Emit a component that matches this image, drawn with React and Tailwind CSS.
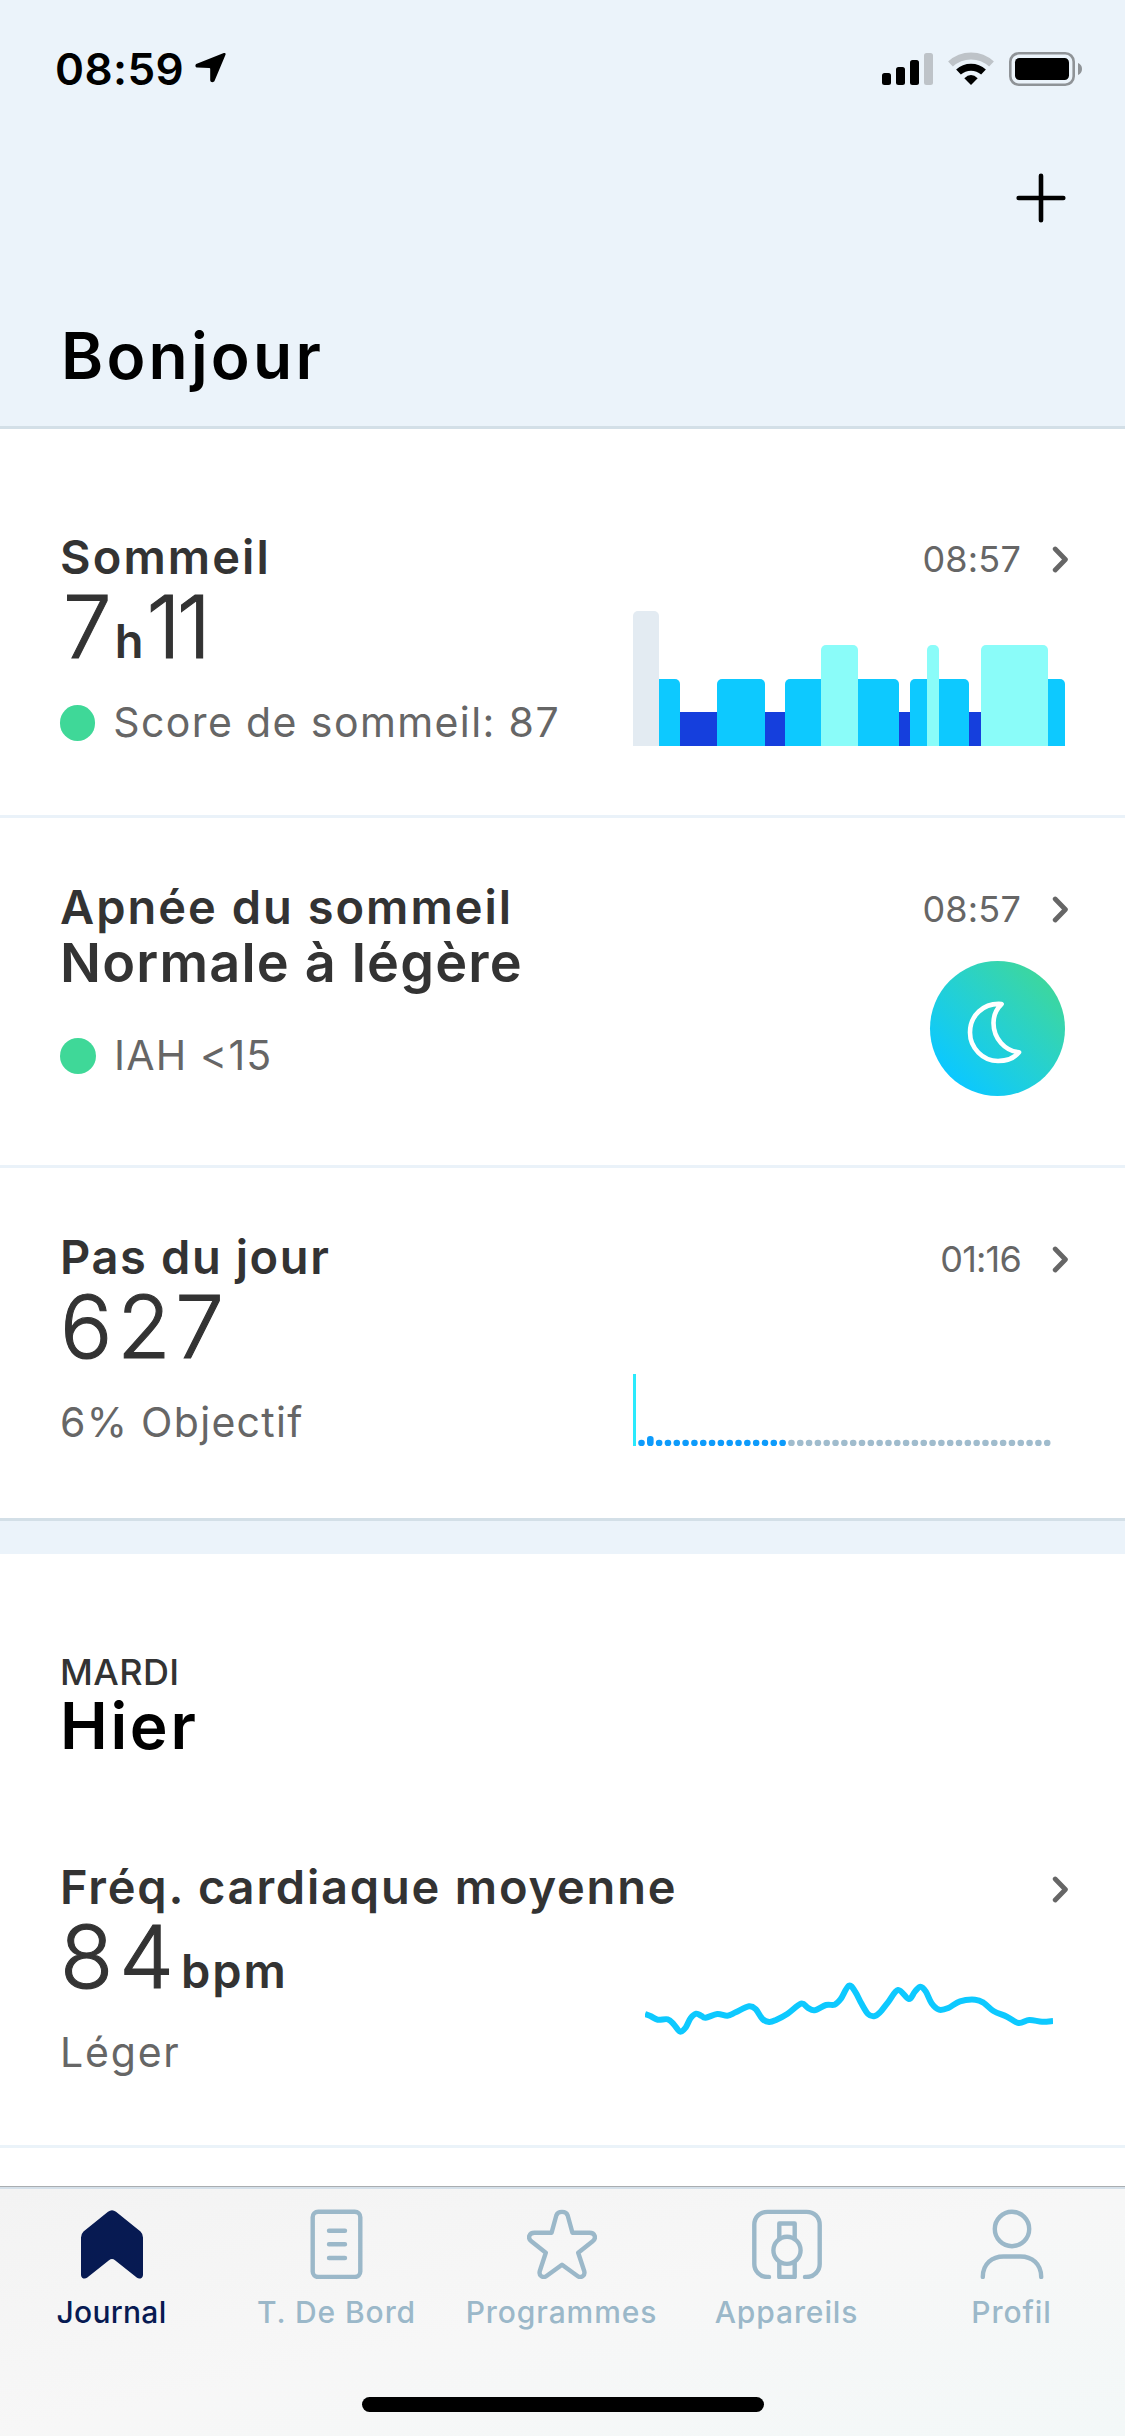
import React from 'react';

// sleep phases: width in px + level
const sleepBars = [
    { w: 26, level: 'awake', round: 'both' },
    { w: 21, level: 'light', round: 'right' },
    { w: 37, level: 'deep' },
    { w: 48, level: 'light', round: 'both' },
    { w: 20, level: 'deep' },
    { w: 36, level: 'light', round: 'left' },
    { w: 37, level: 'rem', round: 'both' },
    { w: 41, level: 'light', round: 'right' },
    { w: 11, level: 'deep' },
    { w: 17, level: 'light', round: 'left' },
    { w: 12, level: 'rem', round: 'both' },
    { w: 30, level: 'light', round: 'right' },
    { w: 12, level: 'deep' },
    { w: 67, level: 'rem', round: 'both' },
    { w: 17, level: 'light', round: 'right' },
];

const levelClass = {
    awake: 'h-[135px] bg-[#e3ebf2]',
    rem: 'h-[101px] bg-[#8afcf9]',
    light: 'h-[67px] bg-[#0dc9ff]',
    deep: 'h-[34px] bg-[#153fdd]',
};

const roundClass = {
    both: 'rounded-t-[5px]',
    left: 'rounded-tl-[5px]',
    right: 'rounded-tr-[5px]',
};

const heartPoints = [
    [0, 34], [5.4, 36], [12.7, 39.7], [22.8, 39.3], [28.8, 44.3], [35.2, 51.7], [40.8, 47.3], [45.5, 38.3],
    [51.2, 33.7], [56.2, 35.7], [60.6, 37.7], [72.3, 34], [82.4, 35.7], [90.7, 32.3], [104, 26.3], [110.8, 29.3],
    [117.5, 39], [124.2, 42], [131, 40], [142.6, 33.7], [156, 23.7], [162.7, 27.7], [169.4, 30.3], [181, 25],
    [189.5, 24.7], [195.5, 19.3], [203.9, 5.7], [210.2, 11.7], [216.3, 23.3], [223, 34], [229, 36.3], [234.7, 32.7],
    [243, 22.3], [253.1, 10], [263.8, 19], [269.8, 11.7], [275.5, 6.7], [280.9, 11.7], [286.6, 23.3], [294, 29.7],
    [303.3, 28], [315, 21.3], [330.1, 19.7], [338.5, 22.7], [348.5, 31], [361.9, 36.7], [373.6, 43], [384.3, 40],
    [397, 41.7], [408, 41],
];

// Catmull-Rom to bezier
function smoothPath(pts) {
    let d = `M${pts[0][0]} ${pts[0][1]}`;
    for (let i = 0; i < pts.length - 1; i++) {
        const p0 = pts[i - 1] || pts[i];
        const p1 = pts[i];
        const p2 = pts[i + 1];
        const p3 = pts[i + 2] || p2;
        d += `C${p1[0] + (p2[0] - p0[0]) / 6} ${p1[1] + (p2[1] - p0[1]) / 6} ${p2[0] - (p3[0] - p1[0]) / 6} ${p2[1] - (p3[1] - p1[1]) / 6} ${p2[0]} ${p2[1]}`;
    }
    return d;
}

function SleepChart() {
    return (
        <div className="flex h-[135px] w-[432px] items-end">
            {sleepBars.map((bar, i) => (
                <div
                    key={i}
                    className={`${levelClass[bar.level]} ${roundClass[bar.round] || ''}`}
                    style={{ width: bar.w }}
                />
            ))}
        </div>
    );
}

function MoonBadge() {
    return (
        <div className="h-[135px] w-[135px] rounded-full bg-linear-to-tr from-[#0bc8ff] from-15% to-[#3fd798] to-90%">
            <svg viewBox="0 0 135 135" className="h-full w-full" fill="none" stroke="#fff" strokeWidth="4.6" strokeLinejoin="round">
                <path d="M71.6 43C53 41.6 40 55 40 71.5C40 87 53 100 68 100C77 100 84.5 96.8 89 91.3C75 90 63.5 77.5 63.5 62C63.5 54.5 66.5 48 71.6 43Z" />
            </svg>
        </div>
    );
}

function StepsChart() {
    return (
        <svg viewBox="0 0 432 135" className="h-[135px] w-[432px]">
            <rect x="0" y="63" width="3" height="72" fill="#2aeafc" />
            {Array.from({ length: 47 }, (_, i) => (
                <rect
                    key={i}
                    x={5.2 + i * 8.82}
                    y={i === 1 ? 125 : 128.8}
                    width="6.6"
                    height={i === 1 ? 10 : 6.2}
                    rx="3.1"
                    fill={i < 17 ? '#0d9bfb' : '#a0bccd'}
                />
            ))}
        </svg>
    );
}

function HeartChart() {
    return (
        <svg viewBox="0 0 408 60" className="mt-[39px] mr-3 h-[60px] w-[408px]" fill="none">
            <path d={smoothPath(heartPoints)} stroke="#0dc9ff" strokeWidth="6" />
        </svg>
    );
}

function Row({ title, titleSpacing = 'tracking-[1.8px]', time, timeSpacing = 'tracking-[0.2px]', value, sub, border, chart }) {
    return (
        <div className={`flex justify-between border-b-3 pr-[60px] pl-[60px] ${border}`}>
            {/* long titles run over the empty part of the right column */}
            <div className="w-[500px] pt-[66px] whitespace-nowrap">
                <h2 className={`text-[47px] leading-[46px] font-semibold text-[#333] ${titleSpacing}`}>{title}</h2>
                {value}
                {sub}
            </div>
            <div className="flex shrink-0 flex-col items-end pt-[73px]">
                <div className="-mr-[3px] mb-[34px] flex h-9 items-center gap-[31px]">
                    <span className={`text-[36px] leading-[36px] text-[#666] ${timeSpacing}`}>{time}</span>
                    <svg viewBox="0 0 16 27" className="h-[27px] w-4" fill="none" stroke="#666" strokeWidth="4.8" strokeLinecap="round" strokeLinejoin="round">
                        <path d="M3.2 3L13.4 13.5L3.2 24" />
                    </svg>
                </div>
                {chart}
            </div>
        </div>
    );
}

function Dot() {
    return <span className="mr-[18px] h-9 w-9 rounded-full bg-[#3fd898]" />;
}

function Unit({ className, children }) {
    return <span className={`text-[47px] leading-none font-semibold [-webkit-text-stroke:0] ${className}`}>{children}</span>;
}

function BigValue({ className, children }) {
    return (
        <p className={`mt-1 flex h-[86px] items-baseline text-[87px] leading-[86px] font-light text-[#333] [-webkit-text-stroke:1.1px_#333] ${className}`}>
            {children}
        </p>
    );
}

function StatusBar() {
    return (
        <div className="flex justify-between pt-[47px] pr-[43px] pl-[55px]">
            <div className="flex h-11 items-center">
                <span className="text-[44px] leading-[44px] font-semibold tracking-[0.4px]">08:59</span>
                <svg viewBox="0 0 32 32" className="mb-[2px] ml-[11px] h-8 w-8" fill="#000">
                    <path d="M28.8 1C30.3 0.5 31 1.6 30.4 3L19.6 28.8C18.6 31 15.2 30.6 15.2 28V17C15.2 16.2 14.8 15.9 14 15.9L2.5 15.6C0 15.5 -0.3 12.6 1.8 11.7Z" />
                </svg>
            </div>
            <svg viewBox="0 0 200 34" className="mt-[5px] h-[34px] w-[200px]">
                <rect x="0" y="21" width="9" height="12" rx="2.5" />
                <rect x="14" y="15" width="9" height="18" rx="2.5" />
                <rect x="28" y="8" width="9" height="25" rx="2.5" />
                <rect x="42" y="1" width="9" height="32" rx="2.5" fill="#bec3c8" />
                <path d="M68.5 12A30 30 0 0 1 109.5 12" fill="none" stroke="#bec3c8" strokeWidth="7" />
                <path d="M76.5 20A18.5 18.5 0 0 1 101.5 20" fill="none" stroke="#000" strokeWidth="7" />
                <path d="M89 33L82.3 26.2Q89 20 95.7 26.2Z" />
                <rect x="128.3" y="1.3" width="63.4" height="31.4" rx="8.5" fill="none" stroke="#8f9397" strokeWidth="2.6" />
                <rect x="133" y="6" width="54" height="22" rx="4.5" />
                <path d="M196 11C198.8 12.2 200 14.3 200 17C200 19.7 198.8 21.8 196 23Z" fill="#8f9397" />
            </svg>
        </div>
    );
}

function JournalIcon() {
    return (
        <svg viewBox="0 0 70 70" className="h-[70px] w-[70px]" fill="#071a52">
            <path d="M31 2.8Q35 -0.5 39 2.8L63.5 22.5Q66 25 66 28.5V66C66 69.5 62 70.5 60 68.8L38 51.3Q35 48.8 32 51.3L10 68.8C8 70.5 4 69.5 4 66V28.5Q4 25 6.5 22.5Z" />
        </svg>
    );
}

function LineIcon({ children }) {
    return (
        <svg viewBox="0 0 70 70" className="h-[70px] w-[70px]" fill="none" stroke="#9bb8c9" strokeWidth="4.4" strokeLinecap="round" strokeLinejoin="round">
            {children}
        </svg>
    );
}

const tabs = [
    { label: 'Journal', active: true, icon: <JournalIcon /> },
    {
        label: 'T. De Bord',
        icon: (
            <LineIcon>
                <rect x="10.7" y="2.7" width="47.6" height="65.3" rx="5.5" />
                <path d="M27 21.7H43M27 35.3H43M27 49H43" />
            </LineIcon>
        ),
    },
    {
        label: 'Programmes',
        icon: (
            <LineIcon>
                <path d="M35 2.9Q39.5 2.9 40.7 6.5L45.4 23.7H62.5C68 23.7 69.5 28.8 66 32L51.2 43.7L57.2 62C58.5 66.8 54 69.5 50.5 67L35 55.7L19.5 67C16 69.5 11.5 66.8 12.8 62L18.8 43.7L4 32C0.5 28.8 2 23.7 7.5 23.7H24.6L29.3 6.5Q30.5 2.9 35 2.9Z" />
            </LineIcon>
        ),
    },
    {
        label: 'Appareils',
        icon: (
            <LineIcon>
                <path d="M17 68H15.5C8 68 2.3 62 2.3 55V16C2.3 8 8 2.9 15.5 2.9H54.5C62 2.9 67.7 8 67.7 16V55C67.7 62 62 68 54.5 68H53" />
                <circle cx="35" cy="41.3" r="13.6" />
                <path d="M27.3 29V14.5H42.7V29M27.3 54V68H42.7V54" />
            </LineIcon>
        ),
    },
    {
        label: 'Profil',
        icon: (
            <LineIcon>
                <circle cx="35" cy="20" r="17.2" />
                <path d="M5.8 68C5.8 54.5 15.5 47.5 26.5 47.5H43.5C54.5 47.5 64.2 54.5 64.2 68" />
            </LineIcon>
        ),
    },
];

function TabBar() {
    return (
        <div className="fixed inset-x-0 bottom-0 h-[250px] border-t border-[#a9adb0] bg-linear-to-br from-[#f3f3f3] via-[#f7f7f7] to-[#f3f8f8]">
            <div className="h-[2px] bg-[#d5e0e9]" />
            <div className="mr-px -ml-px grid grid-cols-5 pt-5">
                {tabs.map((tab) => (
                    <div key={tab.label} className="flex flex-col items-center">
                        {tab.icon}
                        <span
                            className={`mt-[17px] text-[30px] leading-[32px] font-medium whitespace-nowrap ${
                                tab.active ? 'tracking-[0.3px] text-[#071a52]' : 'tracking-[0.9px] text-[#9bb8c9]'
                            }`}
                        >
                            {tab.label}
                        </span>
                    </div>
                ))}
            </div>
            <div className="mx-auto mt-[69px] h-[15px] w-[402px] rounded-full bg-black" />
        </div>
    );
}

export default function App() {
    return (
        <div className="h-[2436px] w-[1125px] overflow-hidden bg-white font-['Inter','Liberation_Sans',sans-serif] text-black">
            <header className="flex h-[429px] flex-col border-b-3 border-[#d3dfe7] bg-[#ebf3fa]">
                <StatusBar />
                <svg viewBox="0 0 50 50" className="mt-[82px] mr-[59px] h-[50px] w-[50px] self-end" stroke="#000" strokeWidth="4.6" strokeLinecap="round">
                    <path d="M25 2.7V47.3M2.7 25H47.3" />
                </svg>
                <h1 className="mt-[101px] ml-[61px] text-[64px] leading-[64px] font-semibold tracking-[3.2px]">Bonjour</h1>
            </header>

            <section className="pt-[39px]">
                <Row
                    title="Sommeil"
                    titleSpacing="tracking-[2.1px]"
                    time="08:57"
                    border="h-[350px] border-[#eaf2f9]"
                    value={
                        <BigValue className="pl-[3px]">
                            7<Unit className="ml-[3px]">h</Unit>
                            <span className="ml-[3px] tracking-[-4px]">11</span>
                        </BigValue>
                    }
                    sub={
                        <p className="mt-8 flex h-[41px] items-center text-[41px] leading-[41px] tracking-[1.4px] text-[#666]">
                            <Dot />
                            Score de sommeil: 87
                        </p>
                    }
                    chart={<SleepChart />}
                />
                <Row
                    title="Apnée du sommeil"
                    titleSpacing="tracking-[2px]"
                    time="08:57"
                    border="h-[350px] border-[#eaf2f9]"
                    value={<p className="mt-[6px] text-[54px] leading-[53px] font-semibold tracking-[1.2px] text-[#333]">Normale à légère</p>}
                    sub={
                        <p className="mt-[46px] flex h-[41px] items-center text-[41px] leading-[41px] tracking-[1.2px] text-[#666]">
                            <Dot />
                            IAH &lt;15
                        </p>
                    }
                    chart={<MoonBadge />}
                />
                <Row
                    title="Pas du jour"
                    titleSpacing="tracking-[1.6px]"
                    time="01:16"
                    timeSpacing="tracking-[-0.8px]"
                    border="h-[353px] border-[#d3dfe7]"
                    value={<BigValue className="tracking-[4.8px]">627</BigValue>}
                    sub={<p className="mt-8 text-[41px] leading-[41px] tracking-[1.3px] text-[#666]">6% Objectif</p>}
                    chart={<StepsChart />}
                />
            </section>

            <div className="h-[33px] bg-[#ebf3fa]" />

            <section>
                <div className="h-[244px] pt-[100px] pl-[60px]">
                    <p className="text-[36px] leading-[36px] font-medium tracking-[0.4px] text-[#333]">MARDI</p>
                    <h1 className="mt-[4px] text-[64px] leading-[64px] font-semibold tracking-[2.7px]">Hier</h1>
                </div>
                <Row
                    title="Fréq. cardiaque moyenne"
                    border="h-[350px] border-[#ebf3f9]"
                    value={
                        <BigValue className="tracking-[6px]">
                            84<Unit className="ml-px tracking-[2px]">bpm</Unit>
                        </BigValue>
                    }
                    sub={<p className="mt-8 text-[41px] leading-[41px] tracking-[1.8px] text-[#666]">Léger</p>}
                    chart={<HeartChart />}
                />
            </section>

            <TabBar />
        </div>
    );
}
